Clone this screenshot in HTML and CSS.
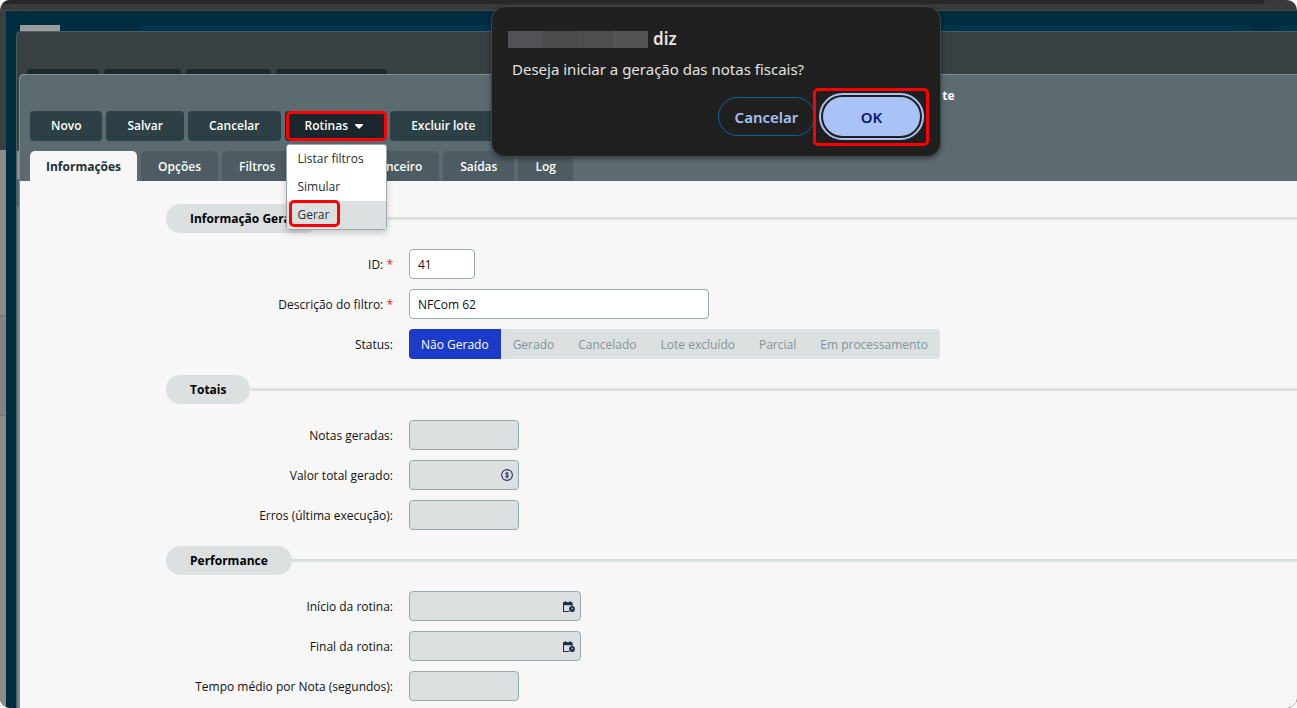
FILE: index.html
```html
<!DOCTYPE html>
<html lang="pt-BR">
<head>
<meta charset="utf-8">
<title>Lote de notas</title>
<link rel="stylesheet" href="styles.css">
</head>
<body>
<div class="browser">
  <div class="chrome"><div class="chrome-tab"></div></div>
  <div class="desk">
    <div class="side"><div class="side-top"></div><div class="side-page"></div><div class="side-row"></div><div class="side-page side-rest"></div></div>
    <div class="stage">
      <div class="stage-head"><div class="logo"></div><div class="search"></div><div class="search-end"></div></div>
      <div class="window-back">
        <div class="back-buttons"><i></i><i></i><i></i><i></i></div>
        <main class="window">
          <header class="head">
            <h1 class="title">te</h1>
            <div class="toolbar">
              <button class="btn" type="button">Novo</button>
              <button class="btn" type="button">Salvar</button>
              <button class="btn" type="button">Cancelar</button>
              <div class="dropdown">
                <button class="btn btn-open" type="button" aria-expanded="true">Rotinas <svg width="8" height="5" viewBox="0 0 8 5"><path d="M0 0h8v1L4 5 0 1z" fill="#fff"/></svg></button>
                <span class="mark mark-routines"></span>
                <div class="menu">
                  <button class="item" type="button">Listar filtros</button>
                  <button class="item" type="button">Simular</button>
                  <button class="item item-on" type="button">Gerar<span class="mark mark-item"></span></button>
                </div>
              </div>
              <button class="btn" type="button">Excluir lote</button>
            </div>
            <nav class="tabs">
              <button class="tab tab-on" type="button">Informações</button>
              <button class="tab" type="button">Opções</button>
              <button class="tab" type="button">Filtros</button>
              <button class="tab tab-wide" type="button">Financeiro</button>
              <button class="tab" type="button">Saídas</button>
              <button class="tab" type="button">Log</button>
            </nav>
          </header>
          <form class="form">
            <section class="group">
              <h2 class="legend"><span>Informação Geral</span></h2>
              <div class="row"><label for="id">ID: <b>*</b></label><input class="field short" id="id" value="41"></div>
              <div class="row"><label for="desc">Descrição do filtro: <b>*</b></label><input class="field long" id="desc" value="NFCom 62"></div>
              <div class="row"><span class="label" id="st">Status:</span>
                <div class="status" role="group" aria-labelledby="st">
                  <button class="seg seg-on" type="button">Não Gerado</button>
                  <button class="seg" type="button">Gerado</button>
                  <button class="seg" type="button">Cancelado</button>
                  <button class="seg" type="button">Lote excluído</button>
                  <button class="seg" type="button">Parcial</button>
                  <button class="seg" type="button">Em processamento</button>
                </div>
              </div>
            </section>
            <section class="group">
              <h2 class="legend"><span>Totais</span></h2>
              <div class="row"><label for="notas">Notas geradas:</label><input class="field locked" id="notas" readonly></div>
              <div class="row"><label for="valor">Valor total gerado:</label>
                <div class="with-icon"><input class="field locked" id="valor" readonly>
                  <svg class="icon" viewBox="0 0 12 12"><circle cx="6" cy="6" r="5.4" fill="none" stroke="#2a3560" stroke-width="1.1"/><path d="M7.7 4.4C7.3 3.7 4.5 3.5 4.5 4.9c0 1.3 3.2.9 3.2 2.2 0 1.4-2.9 1.200-3.400.4M6 2.800v6.400" fill="none" stroke="#2a3560" stroke-width="1"/></svg>
                </div></div>
              <div class="row"><label for="erros">Erros (última execução):</label><input class="field locked" id="erros" readonly></div>
            </section>
            <section class="group">
              <h2 class="legend"><span>Performance</span></h2>
              <div class="row"><label for="inicio">Início da rotina:</label>
                <div class="with-icon"><input class="field locked date" id="inicio" readonly>
                  <svg class="icon icon-date" viewBox="0 0 12 12"><path d="M2.500 0v2M7 0v2" stroke="#1c2850" stroke-width="1.200"/><path d="M0 1.200h9.500v3H0z" fill="#1c2850"/><path d="M.5 3v7.500h5.500M9 3v2.400" fill="none" stroke="#1c2850" stroke-width="1.100"/><circle cx="9" cy="8" r="2.900" fill="#1c2850"/><path d="M8.900 6.500v1.600h1.300" fill="none" stroke="#dce0e0" stroke-width=".8"/></svg>
                </div></div>
              <div class="row"><label for="final">Final da rotina:</label>
                <div class="with-icon"><input class="field locked date" id="final" readonly>
                  <svg class="icon icon-date" viewBox="0 0 12 12"><path d="M2.500 0v2M7 0v2" stroke="#1c2850" stroke-width="1.200"/><path d="M0 1.200h9.500v3H0z" fill="#1c2850"/><path d="M.5 3v7.500h5.500M9 3v2.400" fill="none" stroke="#1c2850" stroke-width="1.100"/><circle cx="9" cy="8" r="2.900" fill="#1c2850"/><path d="M8.900 6.500v1.600h1.300" fill="none" stroke="#dce0e0" stroke-width=".8"/></svg>
                </div></div>
              <div class="row"><label for="tempo">Tempo médio por Nota (segundos):</label><input class="field locked" id="tempo" readonly></div>
            </section>
          </form>
        </main>
      </div>
    </div>
  </div>
  <div class="dialog" role="alertdialog" aria-labelledby="who" aria-describedby="ask">
    <div class="who" id="who"><span class="host"></span>diz</div>
    <p class="ask" id="ask">Deseja iniciar a geração das notas fiscais?</p>
    <div class="answers">
      <button class="answer" type="button">Cancelar</button>
      <button class="answer answer-ok" type="button">OK<span class="mark mark-ok"></span></button>
    </div>
  </div>
</div>
</body>
</html>
```

FILE: styles.css
```css
* { box-sizing: border-box; }
body { margin: 0; background: #fff; font: 12px/18px "Open Sans", "Noto Sans", sans-serif; color: #111; }
button, input { font: inherit; margin: 0; }
button { border: 0; cursor: pointer; white-space: nowrap; }

.browser { position: relative; height: 100vh; display: flex; flex-direction: column; overflow: hidden; border-radius: 10px; background: #3b3b3b; }
.chrome { height: 11px; flex: none; padding-right: 32px; border-bottom: 1px solid #464a4a; }
.chrome-tab { height: 4px; background: #282828; border-radius: 0 0 12px 0; }

.desk { flex: 1; min-height: 0; display: flex; }
.side { width: 6px; flex: none; display: flex; flex-direction: column; }
.side-top { height: 139px; background: #394042; }
.side-page { height: 165px; background: #8b8d8a; }
.side-row { height: 101px; background: #828386; border: solid #707276; border-width: 1px 0; }
.side-rest { flex: 1; }

.stage { flex: 1; min-width: 0; display: flex; flex-direction: column; background: #002c40; }
.stage-head { height: 20px; flex: none; display: flex; align-items: flex-end; padding-left: 14px; }
.logo { width: 40px; height: 6px; background: #9b9b9b; }
.search { flex: 1; height: 6px; margin: 0 26px 0 78px; background: #00344c; border-radius: 12px 12px 0 0; }
.search-end { width: 19px; height: 6px; background: #00344c; border-radius: 12px 0 0 0; }

.window-back { flex: 1; min-height: 0; display: flex; flex-direction: column; margin-left: 10px; padding-left: 2px; border: solid #4d5d61; border-width: 1px 0 0 1px; border-radius: 5px 0 0 0; background: linear-gradient(#394042 119px, #908c8e 119px 147px, #4a6672 147px 175px, #737d85 175px); }
.back-buttons { flex: none; height: 42px; display: flex; align-items: flex-end; gap: 5px; padding-left: 8px; }
.back-buttons i { width: 72px; height: 5px; background: #1c282c; border-radius: 4px 4px 0 0; }
.back-buttons i:nth-child(2) { width: 77px; }
.back-buttons i:nth-child(3) { width: 85px; }
.back-buttons i:nth-child(4) { width: 111px; }

.window { flex: 1; min-height: 0; display: flex; flex-direction: column; border-top: 1px solid #7d9194; border-left: 1px solid #7d9194; border-radius: 5px 0 0 0; background: #f7f7f7; overflow: hidden; }
.head { flex: none; background: #5b6b70; padding-left: 10px; }
.title { margin: 0; padding: 12px 0 6px 72%; font-size: 12px; line-height: 18px; font-weight: 700; color: #fff; }
.toolbar { display: flex; gap: 4px; }
.btn { height: 30px; padding: 0 21px; border-radius: 4px; background: #2c4046; color: #fff; font-weight: 600; }
.btn-open { background: #19272c; padding-left: 20px; }
.btn-open svg { margin: 0 2px 1px 4px; vertical-align: middle; }
.dropdown { position: relative; }

.mark { position: absolute; border: 3px solid #f00; border-radius: 5px; pointer-events: none; }
.mark-routines { inset: 0 -1px 0 1px; }
.mark-item { left: 2px; top: -1px; width: 51px; height: 27px; }
.mark-ok { inset: -9px -9px -10px -10px; }

.menu { position: absolute; z-index: 2; left: 1px; top: 33px; width: 101px; border: 1px solid #9aa8ac; border-radius: 3px; background: #fff; box-shadow: 0 3px 6px #0003; }
.item { display: block; position: relative; width: 100%; height: 28px; padding: 0 11px; text-align: left; background: none; color: #222d38; }
.item-on { background: #dce0e0; }

.tabs { display: flex; gap: 4px; padding-top: 10px; }
.tab { height: 30px; padding: 1px 17px 0; border-radius: 5px 5px 0 0; background: #4d5c62; color: #fff; font-weight: 600; }
.tab-on { padding: 1px 16px 0; background: #f7f7f7; color: #222d38; font-weight: 700; }
.tab-wide { width: 143px; text-align: right; }

.form { padding: 23px 0 0 146px; display: flex; flex-direction: column; gap: 16px; }
.group { display: flex; flex-direction: column; gap: 10px; }
.legend { display: flex; align-items: center; margin: 0 0 6px; font-size: 12px; line-height: 29px; font-weight: 700; color: #000; }
.legend span { padding: 0 24px; border-radius: 15px; background: #dce0e0; }
.legend::after { content: ""; flex: 1; height: 3px; background: #dce0e0; }
.row { display: flex; align-items: center; gap: 16px; height: 30px; }
.row label, .label { width: 227px; padding-top: 1px; text-align: right; }
.row b { color: #f02020; font-weight: 400; }
.field { height: 30px; width: 110px; padding: 0 8px; border: 1px solid #9aa8ac; border-radius: 4px; background: #fff; color: #111; outline: 0; }
.short { width: 66px; }
.long { width: 300px; }
.locked { background: #dce0e0; }
.date { width: 172px; }
.with-icon { position: relative; display: flex; }
.icon { position: absolute; right: 6px; top: 9px; width: 12px; height: 12px; }
.icon-date { top: 10px; }
.status { display: flex; border-radius: 4px; overflow: hidden; background: #dce0e0; }
.seg { height: 30px; padding: 1px 12px 0; background: none; color: #80949b; }
.seg-on { background: #1d3bc9; color: #fff; }

.dialog { position: absolute; z-index: 5; left: 491px; top: 6px; width: 450px; padding: 20px 20px 20px 16px; border: 1px solid #3b494c; border-radius: 14px; background: #1f1f1f; color: #e3e3e3; box-shadow: 0 2px 5px #0006; font-family: "Noto Sans", sans-serif; }
.who { display: flex; align-items: center; gap: 5px; font-size: 17px; line-height: 24px; font-weight: 600; }
.host { width: 140px; height: 17px; background: linear-gradient(90deg, #505255 35px, #4c4c4c 35px 70px, #4e4e4e 70px 105px, #545454 105px); }
.ask { margin: 6px 0 16px 4px; font-size: 15px; line-height: 24px; }
.answers { display: flex; justify-content: flex-end; gap: 8px; }
.answer { position: relative; width: 97px; height: 39px; border: 1px solid #0b6597; border-radius: 20px; background: none; color: #a8c0f5; font-size: 15px; font-weight: 600; }
.answer-ok { border: 0; background: #a9c3f7; color: #10156e; outline: 2px solid #a9c3f7; outline-offset: 2px; }
```
